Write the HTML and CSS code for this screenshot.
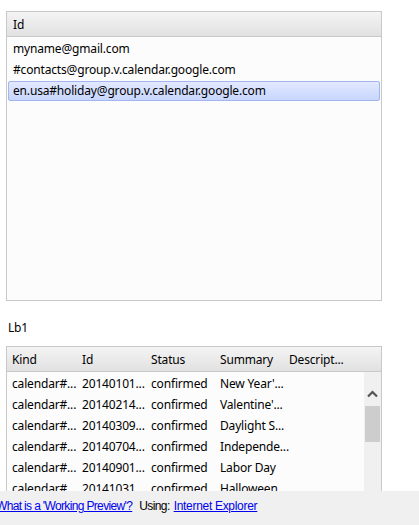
FILE: index.html
```html
<!DOCTYPE html>
<html>
<head>
<meta charset="utf-8">
<link rel="stylesheet" href="styles.css">
</head>
<body>
<div class="page">
  <div class="listbox">
    <div class="hdr"><span class="hcell">Id</span></div>
    <div class="rows">
      <div class="row">myname@gmail.com</div>
      <div class="row">#contacts@group.v.calendar.google.com</div>
      <div class="row sel">en.usa#holiday@group.v.calendar.google.com</div>
    </div>
  </div>
  <div class="label">Lb1</div>
  <div class="grid">
    <div class="ghdr">
      <span class="c c1">Kind</span><span class="c c2">Id</span><span class="c c3">Status</span><span class="c c4">Summary</span><span class="c c5">Descript...</span>
    </div>
    <div class="gbody">
      <div class="grows">
        <div class="grow"><span class="c c1">calendar#...</span><span class="c c2">20140101...</span><span class="c c3">confirmed</span><span class="c c4">New Year'...</span></div>
        <div class="grow"><span class="c c1">calendar#...</span><span class="c c2">20140214...</span><span class="c c3">confirmed</span><span class="c c4">Valentine'...</span></div>
        <div class="grow"><span class="c c1">calendar#...</span><span class="c c2">20140309...</span><span class="c c3">confirmed</span><span class="c c4">Daylight S...</span></div>
        <div class="grow"><span class="c c1">calendar#...</span><span class="c c2">20140704...</span><span class="c c3">confirmed</span><span class="c c4">Independe...</span></div>
        <div class="grow"><span class="c c1">calendar#...</span><span class="c c2">20140901...</span><span class="c c3">confirmed</span><span class="c c4">Labor Day</span></div>
        <div class="grow"><span class="c c1">calendar#...</span><span class="c c2">20141031...</span><span class="c c3">confirmed</span><span class="c c4">Halloween</span></div>
      </div>
      <div class="sbar">
        <svg class="arrow" width="11" height="8" viewBox="0 0 11 8"><path d="M1 6.5 L5.5 2 L10 6.5" fill="none" stroke="#555" stroke-width="2.2"/></svg>
        <div class="thumb"></div>
      </div>
    </div>
  </div>
</div>
<div class="footer">
  <a href="#" class="lnk first">What is a 'Working Preview'?</a><span class="using">Using:</span><a href="#" class="lnk">Internet Explorer</a>
</div>
</body>
</html>
```

FILE: styles.css
```css
html, body {
  margin: 0;
  padding: 0;
  background: #ffffff;
  overflow: hidden;
}
body {
  width: 419px;
  height: 525px;
  position: relative;
  font-family: "Noto Sans", "Open Sans", sans-serif;
  font-size: 12px;
  letter-spacing: -0.17px;
  color: #000;
}
.page {
  padding: 11px 0 0 6px;
  width: 376px;
}
.listbox {
  width: 374px;
  height: 288px;
  border: 1px solid #c8c8c8;
  background: #fcfcfc;
  display: flex;
  flex-direction: column;
}
.hdr {
  height: 24px;
  background: linear-gradient(#f4f4f4, #e1e1e1);
  border-bottom: 1px solid #c9c9c9;
  display: flex;
  align-items: center;
  padding-left: 6px;
  flex: none;
}
.rows {
  padding: 1px 1px 0 1px;
  display: flex;
  flex-direction: column;
}
.row {
  height: 21px;
  line-height: 19px;
  padding-left: 4px;
  border: 1px solid transparent;
  border-radius: 2px;
  box-sizing: border-box;
}
.row.sel {
  background: linear-gradient(#e2e9ff, #c7d6ff);
  border-color: #a2b5ef;
  height: 20px;
  line-height: 18px;
  margin-top: 1px;
}
.label {
  margin: 19px 0 0 2px;
  height: 15px;
  line-height: 15px;
}
.grid {
  margin-top: 11px;
  width: 374px;
  height: 160px;
  border: 1px solid #c8c8c8;
  border-bottom: none;
  background: #fcfcfc;
  display: flex;
  flex-direction: column;
  overflow: hidden;
}
.ghdr {
  height: 24px;
  background: linear-gradient(#f4f4f4, #e1e1e1);
  border-bottom: 1px solid #c9c9c9;
  display: flex;
  align-items: center;
  padding-left: 5px;
  flex: none;
}
.c {
  display: inline-block;
  width: 69px;
  white-space: nowrap;
}
.c1 { width: 70px; }
.gbody {
  display: flex;
  flex: 1;
}
.grows {
  flex: 1;
  padding-top: 1px;
  padding-left: 5px;
}
.grow {
  height: 21px;
  line-height: 21px;
  display: flex;
}
.sbar {
  width: 17px;
  background: #f0f0f0;
  display: flex;
  flex-direction: column;
  align-items: center;
}
.arrow {
  margin-top: 18px;
}
.thumb {
  margin-top: 8px;
  width: 15px;
  height: 36px;
  background: #cdcdcd;
}
.footer {
  position: absolute;
  left: 0;
  top: 491px;
  width: 419px;
  height: 34px;
  background: #f0f0f0;
  font-family: "Liberation Sans", sans-serif;
  font-size: 12px;
  letter-spacing: -0.3px;
  padding: 8px 0 0 0;
  line-height: 15px;
  box-sizing: border-box;
  white-space: nowrap;
}
.lnk {
  color: #0000ee;
  text-decoration: underline;
}
.lnk.first {
  margin-left: -4px;
  letter-spacing: -0.65px;
}
.using {
  margin: 0 4px 0 7px;
  letter-spacing: -0.6px;
}
```
